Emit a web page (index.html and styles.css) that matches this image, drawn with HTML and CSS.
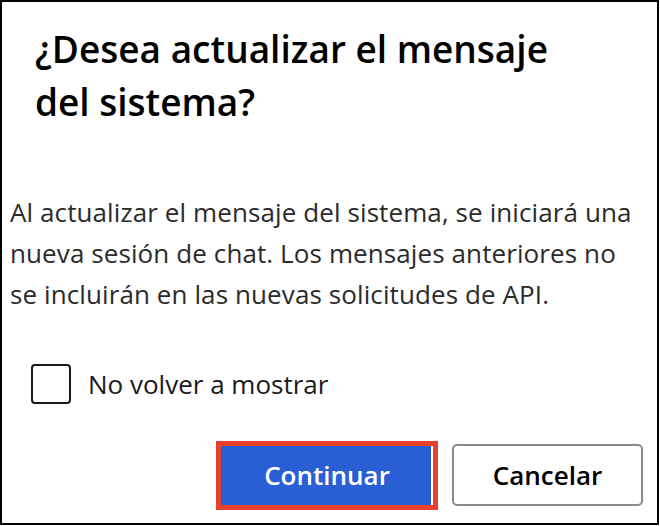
FILE: index.html
```html
<!DOCTYPE html>
<html lang="es">
<head>
<meta charset="utf-8">
<link rel="stylesheet" href="styles.css">
</head>
<body>
<div class="dialog">
  <h1 class="title">¿Desea actualizar el mensaje<br>del sistema?</h1>
  <p class="desc">Al actualizar el mensaje del sistema, se iniciará una<br>nueva sesión de chat. Los mensajes anteriores no<br>se incluirán en las nuevas solicitudes de API.</p>
  <label class="check"><span class="box"></span><span class="check-label">No volver a mostrar</span></label>
  <div class="actions">
    <button class="btn primary">Continuar</button>
    <button class="btn secondary">Cancelar</button>
  </div>
</div>
</body>
</html>
```
FILE: styles.css
```css
html, body {
  margin: 0;
  padding: 0;
  background: #fff;
}
.dialog {
  box-sizing: border-box;
  width: 659px;
  height: 525px;
  border: 2px solid #000;
  display: flex;
  flex-direction: column;
  font-family: "Open Sans", "Noto Sans", sans-serif;
}
.title {
  margin: 20px 0 0 33px;
  font-size: 37px;
  font-weight: 600;
  line-height: 53px;
  color: #000;
  white-space: nowrap;
}
.desc {
  margin: 64px 0 0 8px;
  font-size: 26px;
  line-height: 41px;
  color: #2b2b2b;
  white-space: nowrap;
  letter-spacing: 0.1px;
}
.check {
  display: flex;
  align-items: center;
  gap: 17px;
  margin: 49px 0 0 29px;
}
.box {
  box-sizing: border-box;
  width: 40px;
  height: 40px;
  border: 2px solid #1a1a1a;
  border-radius: 4px;
  flex: none;
}
.check-label {
  font-size: 26px;
  line-height: 40px;
  color: #1a1a1a;
}
.actions {
  display: flex;
  justify-content: flex-end;
  align-items: center;
  gap: 19px;
  margin-top: 40px;
  padding-right: 14px;
}
.btn {
  font-family: "Open Sans", "Noto Sans", sans-serif;
  font-size: 26px;
  font-weight: 600;
  cursor: pointer;
}
.primary {
  width: 212px;
  height: 59px;
  background: #2a5ed4;
  color: #fff;
  border: none;
  border-radius: 0;
  box-shadow: inset -2px 0 0 #fff, 0 0 0 5px #e8412c;
}
.secondary {
  box-sizing: border-box;
  width: 191px;
  height: 62px;
  background: #fff;
  color: #000;
  border: 2px solid #8a8a8a;
  border-radius: 5px;
}
```
